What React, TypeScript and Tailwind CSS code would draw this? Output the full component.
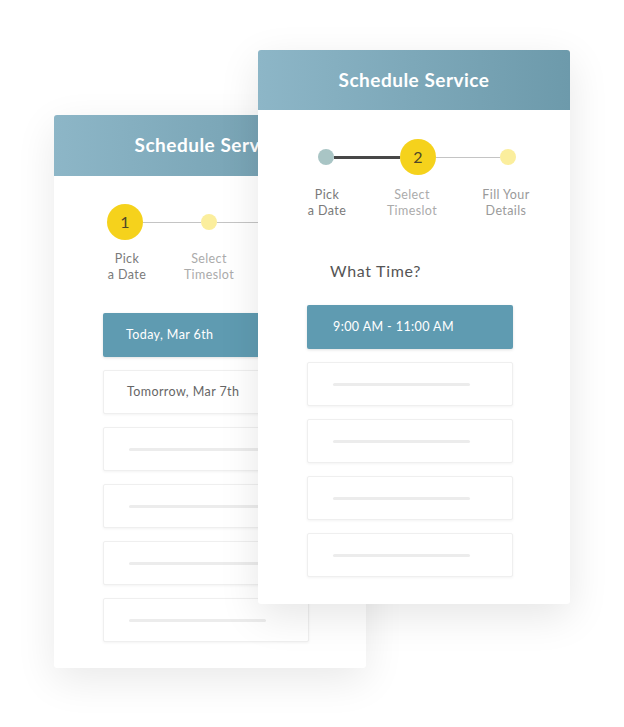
import React from "react"

const font = { fontFamily: "Lato, 'Open Sans', sans-serif" }

function Title() {
  return <span className="text-[19px] font-bold tracking-[0.5px] text-white">Schedule Service</span>
}

function Row({ active, children }: { active?: boolean; children?: React.ReactNode }) {
  return (
    <div
      className={
        active
          ? "flex h-[44px] w-[206px] items-center rounded-[2px] bg-[#5f9bb1] pl-[23px] text-[12.5px] tracking-[0.4px] text-white shadow-[0_1px_3px_rgba(0,0,0,0.12)]"
          : "flex h-[44px] w-[206px] items-center rounded-[2px] border border-[#efefef] bg-white pl-[23px] text-[12.5px] tracking-[0.4px] text-[#666] shadow-[0_1px_3px_rgba(0,0,0,0.05)]"
      }
    >
      {children}
    </div>
  )
}

function EmptyRow() {
  return (
    <div className="flex h-[44px] w-[206px] items-center rounded-[2px] border border-[#efefef] bg-white shadow-[0_1px_3px_rgba(0,0,0,0.05)]">
      <div className="ml-[25px] h-[3px] w-[137px] rounded-full bg-[#ececec]" />
    </div>
  )
}

function Label({ children, className }: { children: React.ReactNode; className: string }) {
  return <div className={"text-center text-[12.5px] leading-[16px] tracking-[0.4px] " + className}>{children}</div>
}

function BackCard() {
  return (
    <div className="absolute left-[54px] top-[115px] flex h-[553px] w-[312px] flex-col rounded-[3px] bg-white shadow-[0_12px_40px_rgba(0,0,0,0.09)]">
      <div className="flex h-[61px] items-center justify-center rounded-t-[3px] bg-gradient-to-r from-[#8db6c7] to-[#6d9aab]">
        <Title />
      </div>
      <div className="mt-[28px] flex items-center pl-[53px]">
        <div className="flex h-[36px] w-[36px] items-center justify-center rounded-full bg-[#f5d21c] text-[16px] text-[#4f4828]">
          1
        </div>
        <div className="h-px w-[58px] bg-[#c4c4c4]" />
        <div className="h-[16px] w-[16px] rounded-full bg-[#fbee9d]" />
        <div className="h-px flex-1 bg-[#c4c4c4]" />
      </div>
      <div className="mt-[11px] flex pl-[28px]">
        <Label className="w-[90px] text-[#7a7a7a]">
          Pick
          <br />a Date
        </Label>
        <Label className="w-[74px] text-[#ababab]">
          Select
          <br />
          Timeslot
        </Label>
      </div>
      <div className="mt-[30px] flex flex-col gap-[13px] pl-[49px]">
        <Row active>Today, Mar 6th</Row>
        <Row>Tomorrow, Mar 7th</Row>
        <EmptyRow />
        <EmptyRow />
        <EmptyRow />
        <EmptyRow />
      </div>
    </div>
  )
}

function FrontCard() {
  return (
    <div className="absolute left-[258px] top-[50px] flex h-[554px] w-[312px] flex-col rounded-[3px] bg-white shadow-[0_12px_40px_rgba(0,0,0,0.1)]">
      <div className="flex h-[60px] items-center justify-center rounded-t-[3px] bg-gradient-to-r from-[#8db6c7] to-[#6d9aab]">
        <Title />
      </div>
      <div className="mt-[29px] flex items-center pl-[60px]">
        <div className="h-[16px] w-[16px] rounded-full bg-[#a9c5c5]" />
        <div className="h-[3px] w-[66px] bg-[#474747]" />
        <div className="flex h-[36px] w-[36px] items-center justify-center rounded-full bg-[#f5d21c] text-[16px] text-[#4f4828]">
          2
        </div>
        <div className="h-px w-[64px] bg-[#c4c4c4]" />
        <div className="h-[16px] w-[16px] rounded-full bg-[#fbee9d]" />
      </div>
      <div className="mt-[12px] flex pl-[24px]">
        <Label className="w-[90px] text-[#7a7a7a]">
          Pick
          <br />a Date
        </Label>
        <Label className="w-[80px] text-[#ababab]">
          Select
          <br />
          Timeslot
        </Label>
        <Label className="w-[108px] text-[#9a9a9a]">
          Fill Your
          <br />
          Details
        </Label>
      </div>
      <div className="ml-[72px] mt-[40px] text-[16px] tracking-[0.7px] text-[#555]">What Time?</div>
      <div className="mt-[22px] flex flex-col gap-[13px] pl-[49px]">
        <Row active>
          <span className="pl-[3px]">9:00 AM - 11:00 AM</span>
        </Row>
        <EmptyRow />
        <EmptyRow />
        <EmptyRow />
        <EmptyRow />
      </div>
    </div>
  )
}

export default function App() {
  return (
    <div className="relative h-[727px] w-[624px] overflow-hidden bg-white" style={font}>
      <BackCard />
      <FrontCard />
    </div>
  )
}
